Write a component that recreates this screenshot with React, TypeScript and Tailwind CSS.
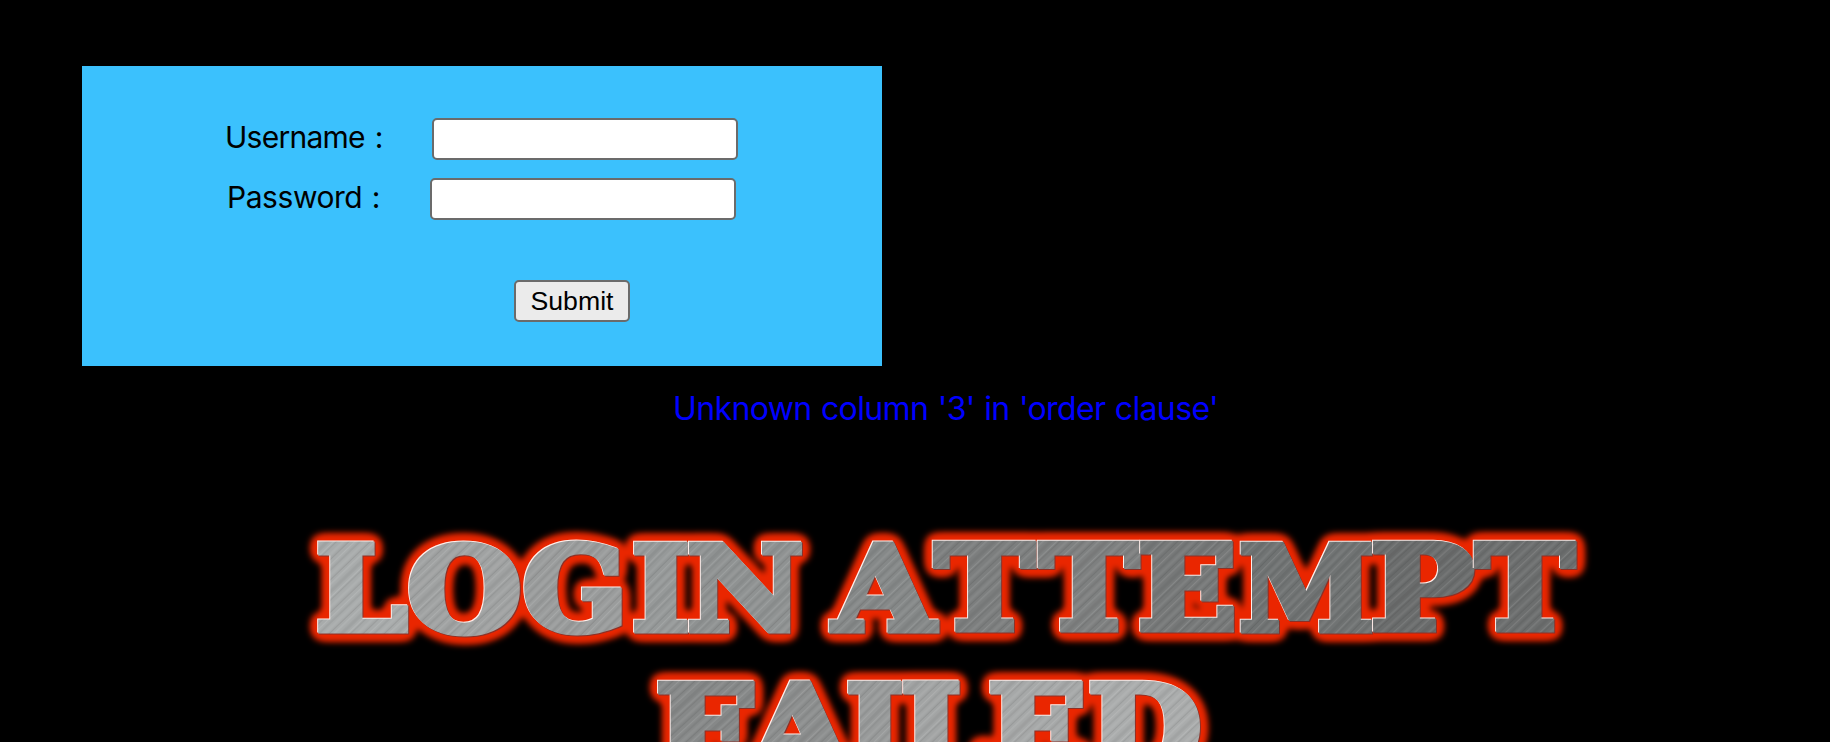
import type { ReactNode } from "react";

const SIZE = 116;
const STROKE = 7;

// Ink bounds of each glyph, in em.
const INK: Record<string, [number, number]> = {
  L: [0.05, 0.684],
  O: [0.045, 0.825],
  G: [0.045, 0.799],
  I: [0.05, 0.418],
  N: [0.04, 0.878],
  A: [-0.01, 0.795],
  T: [0.01, 0.734],
  E: [0.05, 0.716],
  M: [0.04, 1.062],
  P: [0.05, 0.712],
  F: [0.05, 0.696],
  D: [0.05, 0.822],
};

type Letter = { ch: string; x0: number; x1: number; base: number; tone: string };

const LETTERS: Letter[] = [
  { ch: "L", x0: 318, x1: 408, base: 629, tone: "#a8abab" },
  { ch: "O", x0: 409, x1: 519, base: 630, tone: "#a0a2a2" },
  { ch: "G", x0: 524, x1: 624, base: 629, tone: "#9a9c9c" },
  { ch: "I", x0: 634, x1: 687, base: 629, tone: "#969999" },
  { ch: "N", x0: 688, x1: 802, base: 629, tone: "#8f9292" },
  { ch: "A", x0: 828, x1: 940, base: 629, tone: "#858888" },
  { ch: "T", x0: 932, x1: 1036, base: 628, tone: "#7c7e7e" },
  { ch: "T", x0: 1037, x1: 1140, base: 628, tone: "#7e8080" },
  { ch: "E", x0: 1140, x1: 1234, base: 628, tone: "#767878" },
  { ch: "M", x0: 1240, x1: 1372, base: 629, tone: "#707373" },
  { ch: "P", x0: 1373, x1: 1472, base: 628, tone: "#6a6c6c" },
  { ch: "T", x0: 1473, x1: 1576, base: 628, tone: "#6c6e6e" },
  { ch: "F", x0: 658, x1: 754, base: 768, tone: "#868888" },
  { ch: "A", x0: 745, x1: 857, base: 768, tone: "#8c8e8e" },
  { ch: "I", x0: 848, x1: 901, base: 768, tone: "#989a9a" },
  { ch: "L", x0: 903, x1: 993, base: 768, tone: "#a2a4a4" },
  { ch: "E", x0: 990, x1: 1084, base: 768, tone: "#a6a8a8" },
  { ch: "D", x0: 1090, x1: 1199, base: 768, tone: "#aaacac" },
];

function placement({ ch, x0, x1, base }: Letter) {
  const [l, r] = INK[ch];
  const s = (x1 - x0) / ((r - l) * SIZE + STROKE);
  return `translate(${x0 + 0.5 - s * (l * SIZE - STROKE / 2)} ${base - 449.4}) scale(${s} 1)`;
}

// Scratches of the brushed metal: offset, width, colour, opacity.
const SCRATCHES: [number, number, string, number][] = [
  [1, 1, "#fff", 0.12],
  [4, 1.4, "#000", 0.06],
  [7, 2.6, "#fff", 0.06],
  [11, 0.8, "#000", 0.11],
  [14, 1.2, "#fff", 0.11],
  [18, 3, "#000", 0.05],
  [23, 0.8, "#fff", 0.15],
  [25, 1, "#000", 0.08],
  [29, 2, "#fff", 0.07],
  [33, 1, "#000", 0.1],
];

function MetalBanner() {
  return (
    <svg
      className="block h-[292px] w-full shrink-0 font-['DejaVu_Serif',serif] text-[116px] font-bold"
      viewBox="0 0 1830 292"
      strokeLinejoin="miter"
      strokeMiterlimit={2}
      strokeWidth={STROKE}
    >
      <defs>
        <filter id="glow" filterUnits="userSpaceOnUse" x="280" y="40" width="1340" height="330" colorInterpolationFilters="sRGB">
          <feGaussianBlur in="SourceAlpha" stdDeviation="5.2" />
          <feComponentTransfer result="spread">
            <feFuncA type="linear" slope="8" intercept="-0.1" />
          </feComponentTransfer>
          <feFlood floodColor="#ea2600" />
          <feComposite in2="spread" operator="in" />
          <feGaussianBlur stdDeviation="2.4" result="halo" />
          <feGaussianBlur in="SourceGraphic" stdDeviation="0.45" result="face" />
          <feMerge>
            <feMergeNode in="halo" />
            <feMergeNode in="face" />
          </feMerge>
        </filter>
        <filter id="bevel" x="-10%" y="-10%" width="120%" height="120%" colorInterpolationFilters="sRGB">
          <feOffset in="SourceAlpha" dx="-1.3" dy="-1.5" result="up" />
          <feFlood floodColor="#ffeeea" />
          <feComposite in2="up" operator="in" result="light" />
          <feOffset in="SourceAlpha" dx="0.7" dy="0.6" result="down" />
          <feFlood floodColor="#8d3026" />
          <feComposite in2="down" operator="in" result="shade" />
          <feMerge>
            <feMergeNode in="shade" />
            <feMergeNode in="light" />
            <feMergeNode in="SourceGraphic" />
          </feMerge>
        </filter>
        {LETTERS.map((g, i) => (
          <pattern key={i} id={`metal${i}`} width="36" height="80" patternUnits="userSpaceOnUse" patternTransform={`translate(${i * 7} 0) rotate(43)`}>
            <rect width="36" height="80" fill={g.tone} />
            {SCRATCHES.map(([x, w, fill, opacity]) => (
              <rect key={x} x={x} width={w} height="80" fill={fill} opacity={opacity} />
            ))}
          </pattern>
        ))}
      </defs>
      <g filter="url(#glow)">
        {LETTERS.map((g, i) => (
          <g key={i} filter="url(#bevel)">
            <text transform={placement(g)} fill={`url(#metal${i})`} stroke={`url(#metal${i})`}>
              {g.ch}
            </text>
          </g>
        ))}
      </g>
    </svg>
  );
}

function Row({ label, children, className }: { label: string; children: ReactNode; className: string }) {
  return (
    <label className={`flex h-[42px] items-center ${className}`}>
      <span className="-mt-1 w-[207px] whitespace-pre">{label}</span>
      {children}
    </label>
  );
}

const FIELD = "h-[42px] w-[306px] rounded-[5px] border-2 border-[#6b6b6b] bg-white px-1 outline-none";

export default function App() {
  return (
    <main className="flex h-[742px] w-full flex-col overflow-hidden bg-black pt-[66px] font-['Inter',sans-serif] text-[30px] leading-9 text-black">
      <form className="ml-[82px] flex h-[300px] w-[800px] shrink-0 flex-col bg-[#3bc1fd] pt-[52px]">
        <Row label="Username :" className="ml-[143px] tracking-[-0.75px] [word-spacing:2.2px]">
          <input type="text" className={FIELD} />
        </Row>
        <Row label="Password :" className="mt-[18px] ml-[141px] indent-[4px] tracking-[-0.45px] [word-spacing:1.6px]">
          <input type="password" className={FIELD} />
        </Row>
        <button
          type="button"
          className="mt-[60px] ml-[432px] h-[42px] w-[116px] rounded-[5px] border-2 border-[#6b6b6b] bg-[#ebebeb] font-['Liberation_Sans',sans-serif] text-[26.67px] leading-[38px]"
        >
          Submit
        </button>
      </form>
      <p className="mt-[25px] h-[59px] shrink-0 pl-[673px] text-[32px] tracking-[-0.62px] [word-spacing:1px] whitespace-nowrap text-[#0000ff]">
        Unknown column '3' in 'order clause'
      </p>
      <MetalBanner />
    </main>
  );
}
